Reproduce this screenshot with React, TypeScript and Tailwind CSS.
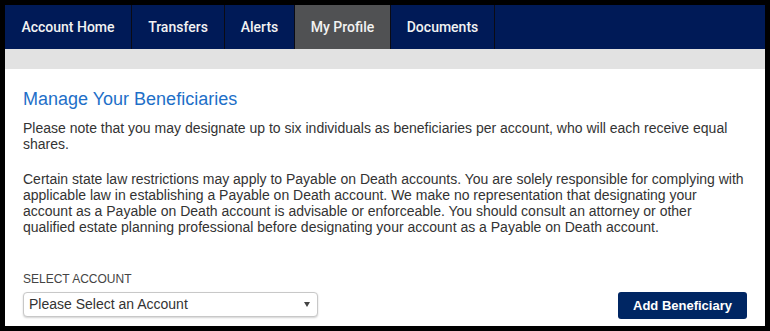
import React from 'react'

const tabs = [
  { label: 'Account Home', width: 'w-[127px]', active: false },
  { label: 'Transfers', width: 'w-[93px]', active: false },
  { label: 'Alerts', width: 'w-[70px]', active: false },
  { label: 'My Profile', width: 'w-[96px]', active: true },
  { label: 'Documents', width: 'w-[104px]', active: false },
]

export default function App() {
  return (
    <div className="w-[770px] h-[331px] bg-black p-[5px] overflow-hidden">
      <div className="h-full bg-white flex flex-col overflow-hidden font-['Liberation_Sans',Arial,sans-serif]">
        {/* top navigation */}
        <nav className="flex h-[44px] shrink-0 bg-[#001a57]">
          {tabs.map((t) => (
            <div
              key={t.label}
              className={
                (t.active ? 'bg-[#505153] ' : '') +
                t.width +
                ' flex items-center justify-center border-r border-[#0b0b14] text-[#f2f2f2] text-[14px] font-medium font-[Roboto,sans-serif]'
              }
            >
              {t.label}
            </div>
          ))}
        </nav>
        <div className="h-5 shrink-0 bg-[#e2e2e2]" />

        <div className="px-[18px] pt-5 text-[#333333]">
          <h1 className="text-[18px] leading-[20px] text-[#1e6fc8]">Manage Your Beneficiaries</h1>
          <p className="mt-[11px] text-[14px] leading-4">
            Please note that you may designate up to six individuals as beneficiaries per account, who will each receive equal shares.
          </p>
          <p className="mt-[19px] text-[14px] leading-4">
            Certain state law restrictions may apply to Payable on Death accounts. You are solely responsible for complying with applicable law in establishing a Payable on Death account. We make no representation that designating your account as a Payable on Death account is advisable or enforceable. You should consult an attorney or other qualified estate planning professional before designating your account as a Payable on Death account.
          </p>

          <div className="mt-[37px] text-[12px] leading-[14px] text-[#444]">SELECT ACCOUNT</div>
          <div className="mt-1.5 flex items-start justify-between">
            <div className="w-[295px] h-[25px] flex items-center justify-between pl-[5px] pr-[7px] border border-[#c8c8c8] rounded-[4px] bg-white shadow-[0_1px_2px_rgba(0,0,0,0.18)] text-[14px] text-[#333]">
              <span>Please Select an Account</span>
              <svg width="6" height="5" viewBox="0 0 6 5">
                <path d="M0 0H6L3 5Z" fill="#444" />
              </svg>
            </div>
            <button className="w-[129px] h-[27px] rounded-[3px] bg-[#002663] text-white text-[13px] font-bold">
              Add Beneficiary
            </button>
          </div>
        </div>
      </div>
    </div>
  )
}
